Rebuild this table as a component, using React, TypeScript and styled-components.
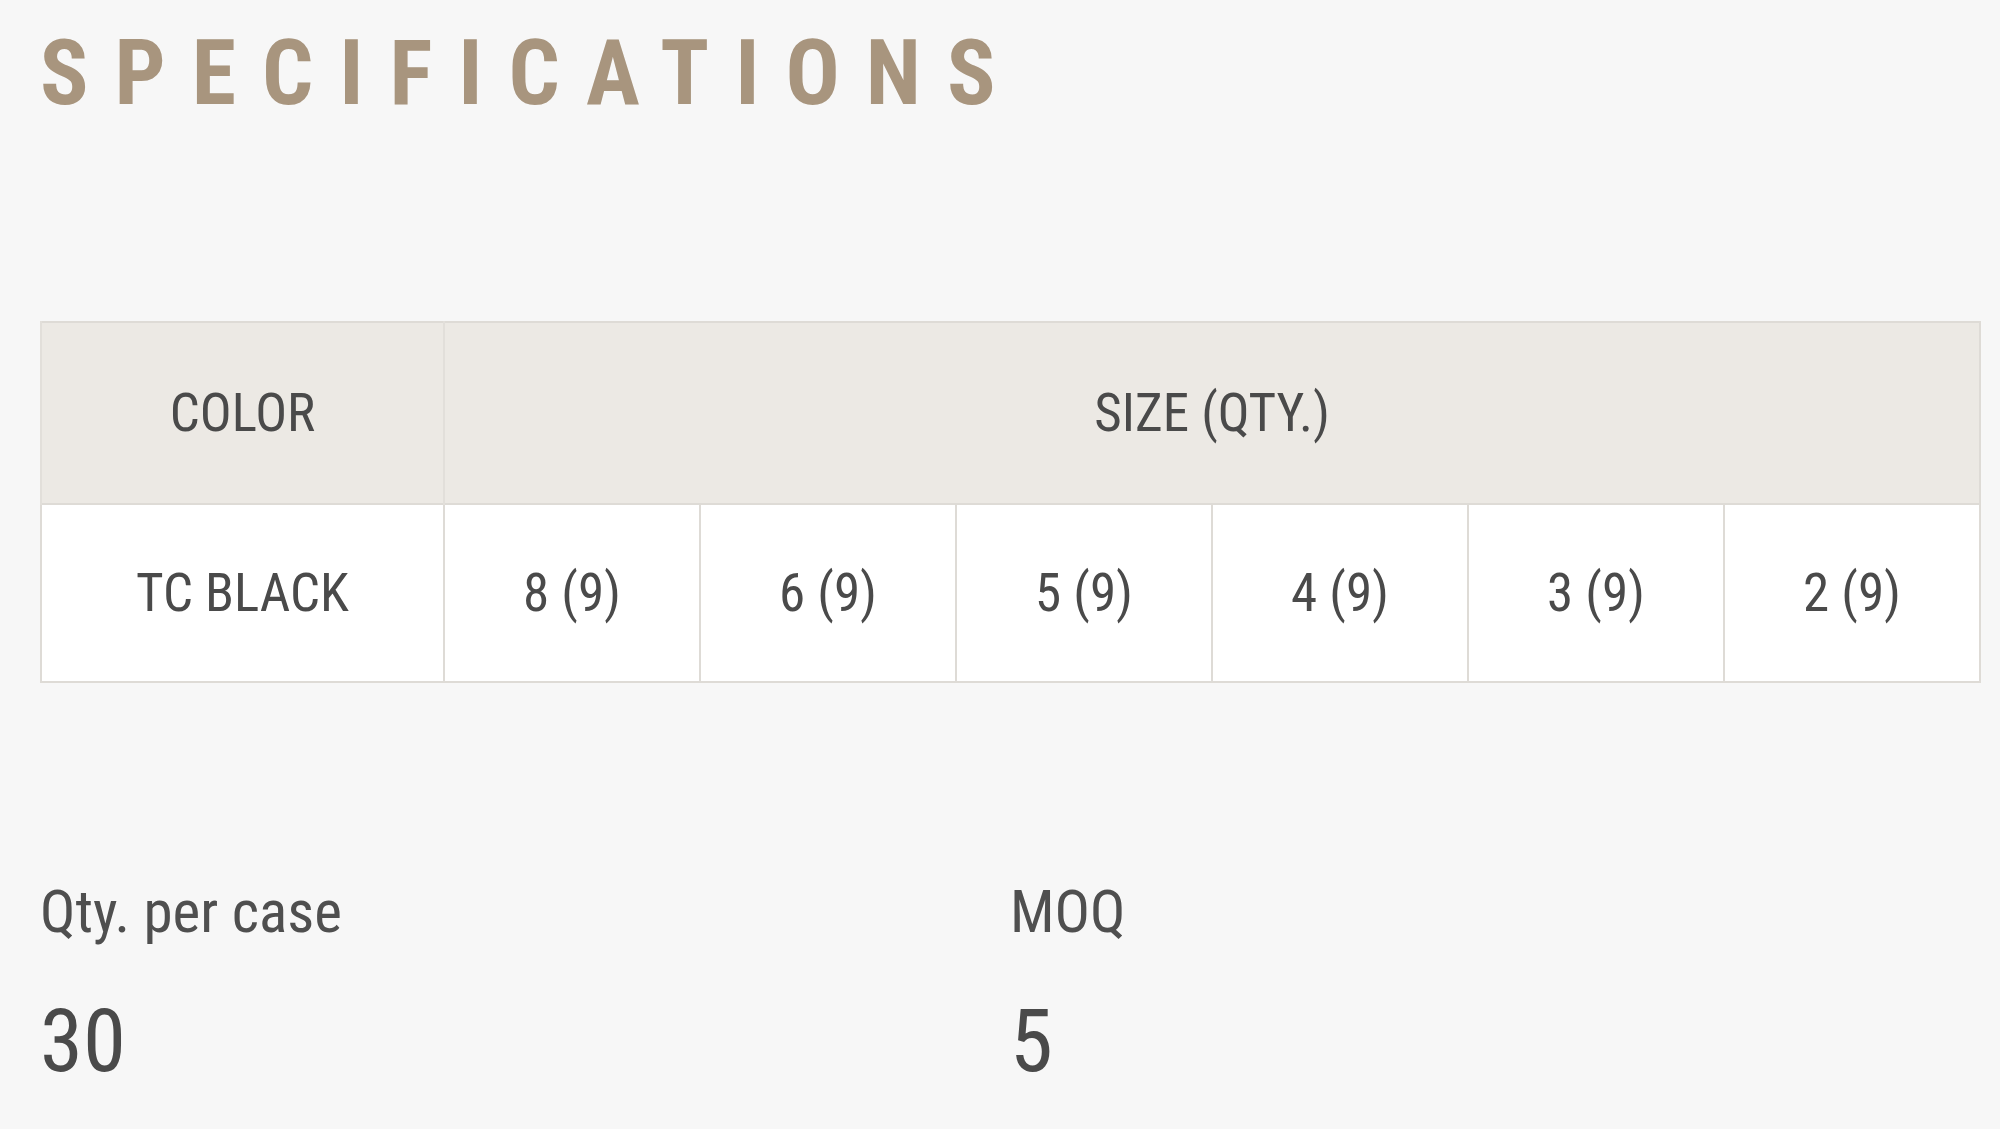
import React from 'react';
import styled, { createGlobalStyle } from 'styled-components';

const GlobalStyle = createGlobalStyle`
  html, body {
    margin: 0;
    padding: 0;
    background: #f7f7f7;
  }
  body {
    font-family: 'Roboto Condensed', Roboto, 'Liberation Sans', sans-serif;
    font-stretch: condensed;
    color: #4a4a4a;
  }
`;

const Page = styled.section`
  width: 1941px;
  padding: 29px 0 0 40px;
`;

const Title = styled.h2`
  margin: 0;
  font-size: 90px;
  line-height: 1;
  font-weight: 700;
  letter-spacing: 26px;
  color: #a8957e;
`;

const SpecTable = styled.table`
  margin-top: 202px;
  width: 1941px;
  border-collapse: collapse;
  table-layout: fixed;
  border: 2px solid #dedbd6;
`;

const HeadCell = styled.th<{ $wide?: boolean }>`
  width: ${p => (p.$wide ? '401px' : 'auto')};
  height: 180px;
  padding: 0;
  background: #ece9e4;
  border-left: 2px solid #e2dfda;
  font-size: 53px;
  font-weight: 400;
  text-align: center;
  color: #4a4a4a;
`;

const Cell = styled.td`
  height: 176px;
  padding: 0;
  background: #ffffff;
  border: 2px solid #dedbd6;
  font-size: 53px;
  text-align: center;
  color: #4a4a4a;
`;

const Facts = styled.div`
  margin-top: 199px;
  display: grid;
  grid-template-columns: 970px 970px;
`;

const Fact = styled.div`
  display: flex;
  flex-direction: column;
`;

const FactLabel = styled.span`
  font-size: 59px;
  line-height: 1;
  color: #4f4f4f;
`;

const FactValue = styled.span`
  margin-top: 57px;
  font-size: 87px;
  line-height: 1;
  color: #4a4a4a;
`;

const sizes = ['8 (9)', '6 (9)', '5 (9)', '4 (9)', '3 (9)', '2 (9)'];

const facts = [
  { label: 'Qty. per case', value: '30' },
  { label: 'MOQ', value: '5' },
];

export default function App() {
  return (
    <>
      <GlobalStyle />
      <Page>
        <Title>SPECIFICATIONS</Title>
        <SpecTable>
          <thead>
            <tr>
              <HeadCell $wide>COLOR</HeadCell>
              <HeadCell colSpan={6}>SIZE (QTY.)</HeadCell>
            </tr>
          </thead>
          <tbody>
            <tr>
              <Cell>TC BLACK</Cell>
              {sizes.map(s => (
                <Cell key={s}>{s}</Cell>
              ))}
            </tr>
          </tbody>
        </SpecTable>
        <Facts>
          {facts.map(f => (
            <Fact key={f.label}>
              <FactLabel>{f.label}</FactLabel>
              <FactValue>{f.value}</FactValue>
            </Fact>
          ))}
        </Facts>
      </Page>
    </>
  );
}
